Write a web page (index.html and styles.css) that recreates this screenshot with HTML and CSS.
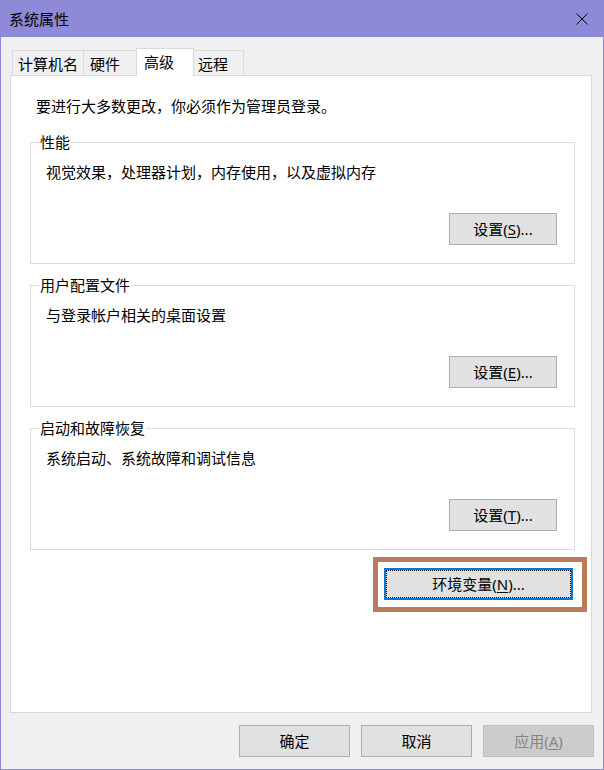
FILE: index.html
```html
<!DOCTYPE html>
<html lang="zh-CN">
<head>
<meta charset="utf-8">
<title>系统属性</title>
<link rel="stylesheet" href="styles.css">
</head>
<body>
<div class="window">
  <div class="titlebar">
    <span class="title">系统属性</span>
    <div class="close">
      <svg width="12" height="12" viewBox="0 0 12 12"><path d="M0.5 0.5 L11.5 11.5 M11.5 0.5 L0.5 11.5" stroke="#000" stroke-width="1" fill="none"/></svg>
    </div>
  </div>
  <div class="client">
    <div class="tabs">
      <div class="tab t1">计算机名</div>
      <div class="tab t2">硬件</div>
      <div class="tab t3 active">高级</div>
      <div class="tab t4">远程</div>
    </div>
    <div class="panel">
      <p class="intro">要进行大多数更改，你必须作为管理员登录。</p>
      <div class="group">
        <span class="legend">性能</span>
        <p class="desc">视觉效果，处理器计划，内存使用，以及虚拟内存</p>
        <div class="row"><button class="btn">设置(<u>S</u>)...</button></div>
      </div>
      <div class="group">
        <span class="legend">用户配置文件</span>
        <p class="desc">与登录帐户相关的桌面设置</p>
        <div class="row"><button class="btn">设置(<u>E</u>)...</button></div>
      </div>
      <div class="group">
        <span class="legend">启动和故障恢复</span>
        <p class="desc">系统启动、系统故障和调试信息</p>
        <div class="row"><button class="btn">设置(<u>T</u>)...</button></div>
      </div>
      <div class="highlight">
        <button class="btn env">环境变量(<u>N</u>)...</button>
      </div>
    </div>
    <div class="footer">
      <button class="fbtn">确定</button>
      <button class="fbtn">取消</button>
      <button class="fbtn disabled" disabled>应用(<u>A</u>)</button>
    </div>
  </div>
</div>
</body>
</html>
```

FILE: styles.css
```css
* { box-sizing: border-box; }
html, body { margin: 0; padding: 0; }
body {
  font-family: "Noto Sans", "Noto Sans CJK SC", sans-serif;
  font-size: 15px;
  color: #000;
  background: #f0f0f0;
}
.window {
  width: 604px;
  height: 770px;
  display: flex;
  flex-direction: column;
  background: #f0f0f0;
}
.titlebar {
  height: 37px;
  flex: none;
  background: #8e8ad7;
  display: flex;
  align-items: center;
  justify-content: space-between;
  padding-left: 9px;
}
.title { font-size: 15px; line-height: 20px; color: #000; padding-top: 1px; }
.close {
  width: 44px;
  height: 37px;
  display: flex;
  align-items: center;
  justify-content: center;
  padding-top: 1px;
}
.close svg { display: block; }
.client {
  flex: 1;
  display: flex;
  flex-direction: column;
  border-left: 1px solid #8e8ad7;
  border-right: 1px solid #8e8ad7;
  border-bottom: 1px solid #8e8ad7;
  padding: 11px 11px 12px 9px;
}
.tabs {
  display: flex;
  align-items: flex-end;
  height: 27px;
  margin-left: 2px;
  flex: none;
}
.tab {
  height: 25px;
  border: 1px solid #d9d9d9;
  border-bottom: none;
  background: #f0f0f0;
  line-height: 20px;
  padding: 3px 0 1px 6px;
  white-space: nowrap;
}
.t1 { width: 72px; padding-left: 5px; }
.t2 { width: 56px; margin-left: -1px; }
.t3 { width: 58px; margin-left: -3px; padding-left: 7px; }
.t4 { width: 53px; margin-left: -3px; }
.tab.active {
  height: 28px;
  background: #fff;
  margin-bottom: -1px;
  position: relative;
  z-index: 2;
  padding-bottom: 4px;
}
.panel {
  flex: 1;
  background: #fff;
  border: 1px solid #d9d9d9;
  padding: 20px 16px 0 0;
  display: flex;
  flex-direction: column;
}
.intro {
  margin: 0 0 26px 25px;
  line-height: 20px;
}
.group {
  position: relative;
  margin-left: 19px;
  margin-bottom: 21px;
  height: 122px;
  border: 1px solid #dcdcdc;
  padding: 19px 17px 18px 15px;
}
.group + .highlight { margin-top: -14px; }
.legend {
  position: absolute;
  left: 8px;
  top: -11px;
  line-height: 20px;
  padding: 0 1px;
  background: #fff;
}
.desc {
  margin: 0 0 31px 0;
  line-height: 20px;
}
.row {
  display: flex;
  justify-content: flex-end;
}
.btn {
  width: 108px;
  height: 32px;
  background: #e1e1e1;
  border: 1px solid #adadad;
  font: inherit;
  color: #000;
  line-height: 28px;
  padding: 0;
  text-align: center;
}
.highlight {
  align-self: flex-end;
  margin-right: -12px;
  width: 214px;
  border: 5px solid #b97c5b;
  padding: 6px 9px 7px 6px;
  background: #fff;
}
.btn.env {
  width: 189px;
  border: 2px solid #0078d7;
  outline: 1px dotted #000;
  outline-offset: -3px;
}
.footer {
  flex: none;
  display: flex;
  justify-content: flex-end;
  gap: 11px;
  margin-top: 12px;
  margin-right: -2px;
}
.fbtn {
  width: 111px;
  height: 32px;
  background: #e1e1e1;
  border: 1px solid #adadad;
  font: inherit;
  color: #000;
  line-height: 28px;
  padding: 0;
}
.fbtn.disabled {
  background: #cccccc;
  border-color: #bfbfbf;
  color: #838383;
}
u { text-underline-offset: 2px; }
```
